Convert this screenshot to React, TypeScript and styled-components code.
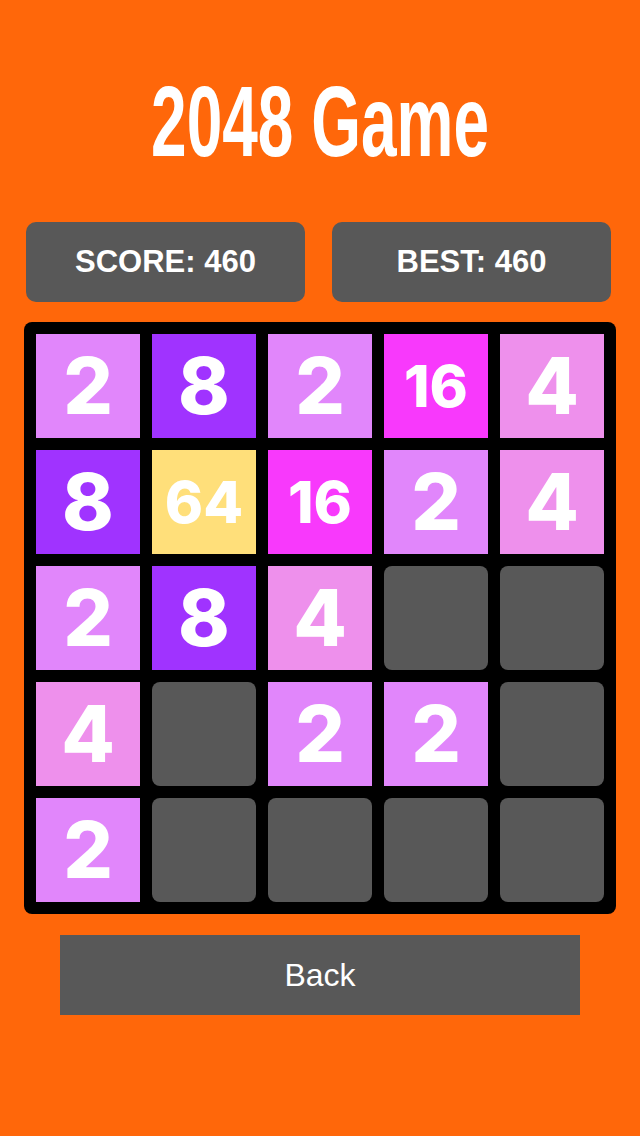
import React from 'react';
import styled, { createGlobalStyle } from 'styled-components';

const GlobalStyle = createGlobalStyle`
  html, body {
    margin: 0;
    padding: 0;
    background: #ff670a;
  }
`;

const tileColors: Record<number, string> = {
  2: '#e186fb',
  4: '#ee90ec',
  8: '#a033ff',
  16: '#f839fc',
  64: '#ffdf7a',
};

const board: number[][] = [
  [2, 8, 2, 16, 4],
  [8, 64, 16, 2, 4],
  [2, 8, 4, 0, 0],
  [4, 0, 2, 2, 0],
  [2, 0, 0, 0, 0],
];

const Page = styled.div`
  min-height: 1136px;
  background: #ff670a;
  display: flex;
  flex-direction: column;
  align-items: center;
  font-family: 'Liberation Sans', Arial, sans-serif;
  color: #fff;
`;

// condensed display face, approximated by squeezing Liberation Sans Bold
const Title = styled.h1`
  margin: 68px 0 0;
  height: 106px;
  line-height: 106px;
  font-family: 'Liberation Sans', Arial, sans-serif;
  font-weight: 700;
  font-size: 100px;
  transform: scaleX(0.64);
  white-space: nowrap;
`;

const ScoreRow = styled.div`
  display: grid;
  grid-template-columns: 279px 279px;
  gap: 27px;
  margin: 48px 3px 0 0;
`;

const ScoreBox = styled.div`
  height: 80px;
  border-radius: 10px;
  background: #585858;
  display: flex;
  align-items: center;
  justify-content: center;
  font-weight: 700;
  font-size: 31px;
`;

const Board = styled.div`
  margin-top: 20px;
  padding: 12px;
  background: #000;
  border-radius: 8px;
  display: grid;
  grid-template-columns: repeat(5, 104px);
  grid-auto-rows: 104px;
  gap: 12px;
`;

const Tile = styled.div<{ $value: number }>`
  display: flex;
  align-items: center;
  justify-content: center;
  background: ${({ $value }) => tileColors[$value] ?? '#585858'};
  border-radius: ${({ $value }) => ($value ? '0' : '8px')};
  font-family: Inter, 'Open Sans', sans-serif;
  font-weight: 800;
  font-size: ${({ $value }) => ($value >= 10 ? '58px' : '78px')};
  line-height: 1;
  color: #fff;
`;

const BackButton = styled.button`
  margin-top: 21px;
  width: 520px;
  height: 80px;
  border: none;
  background: #585858;
  color: #fff;
  font-family: 'Liberation Sans', Arial, sans-serif;
  font-size: 32px;
  cursor: pointer;
`;

export default function App() {
  return (
    <>
      <GlobalStyle />
      <Page>
        <Title>2048 Game</Title>
        <ScoreRow>
          <ScoreBox>SCORE: 460</ScoreBox>
          <ScoreBox>BEST: 460</ScoreBox>
        </ScoreRow>
        <Board>
          {board.flat().map((v, i) => (
            <Tile key={i} $value={v}>
              {v ? v : ''}
            </Tile>
          ))}
        </Board>
        <BackButton>Back</BackButton>
      </Page>
    </>
  );
}
